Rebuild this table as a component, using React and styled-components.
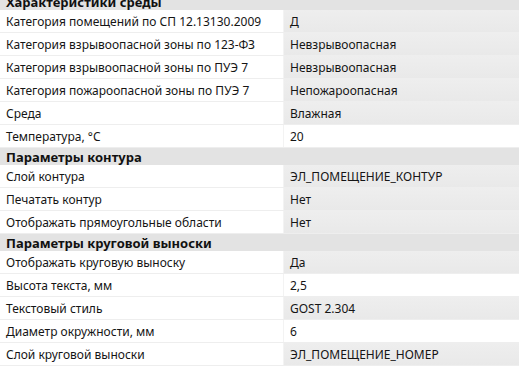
import React from "react";
import styled, { createGlobalStyle } from "styled-components";

const Global = createGlobalStyle`
  html, body { margin: 0; padding: 0; background: #ffffff; overflow: hidden; }
  body { font-family: "Noto Sans", "Open Sans", sans-serif; font-size: 12px; color: #151515; }
`;

const Grid = styled.div`
  display: flex;
  flex-direction: column;
  margin-top: -7px;
  width: 519px;
  background: #ffffff;
`;

const Header = styled.div`
  height: 17px;
  display: flex;
  align-items: center;
  padding: 1px 0 0 6px;
  box-sizing: border-box;
  background: #e3e3e3;
  font-size: 13px;
  font-weight: 700;
  color: #111111;
`;

const Row = styled.div`
  display: grid;
  grid-template-columns: 283px 1fr;
  column-gap: 1px;
  height: 22px;
  border-bottom: 1px solid #eeeeee;
  background: #f3f3f3;
`;

const Label = styled.div`
  display: flex;
  align-items: center;
  padding-left: 6px;
  background: #ffffff;
  white-space: nowrap;
  overflow: hidden;
`;

const Value = styled.div`
  display: flex;
  align-items: center;
  padding-left: 6px;
  background: ${(p) => (p.$editable ? "#ffffff" : "linear-gradient(#eeeeee, #e9e9e9)")};
  white-space: nowrap;
  overflow: hidden;
`;

const sections = [
  {
    title: "Характеристики среды",
    rows: [
      ["Категория помещений по СП 12.13130.2009", "Д"],
      ["Категория взрывоопасной зоны по 123-ФЗ", "Невзрывоопасная"],
      ["Категория взрывоопасной зоны по ПУЭ 7", "Невзрывоопасная"],
      ["Категория пожароопасной зоны по ПУЭ 7", "Непожароопасная"],
      ["Среда", "Влажная"],
      ["Температура, °C", "20", true],
    ],
  },
  {
    title: "Параметры контура",
    rows: [
      ["Слой контура", "ЭЛ_ПОМЕЩЕНИЕ_КОНТУР"],
      ["Печатать контур", "Нет"],
      ["Отображать прямоугольные области", "Нет"],
    ],
  },
  {
    title: "Параметры круговой выноски",
    rows: [
      ["Отображать круговую выноску", "Да"],
      ["Высота текста, мм", "2,5", true],
      ["Текстовый стиль", "GOST 2.304"],
      ["Диаметр окружности, мм", "6", true],
      ["Слой круговой выноски", "ЭЛ_ПОМЕЩЕНИЕ_НОМЕР"],
    ],
  },
];

export default function App() {
  return (
    <>
      <Global />
      <Grid>
        {sections.map((s) => (
          <React.Fragment key={s.title}>
            <Header>{s.title}</Header>
            {s.rows.map(([label, value, editable]) => (
              <Row key={label}>
                <Label>{label}</Label>
                <Value $editable={editable}>{value}</Value>
              </Row>
            ))}
          </React.Fragment>
        ))}
      </Grid>
    </>
  );
}
